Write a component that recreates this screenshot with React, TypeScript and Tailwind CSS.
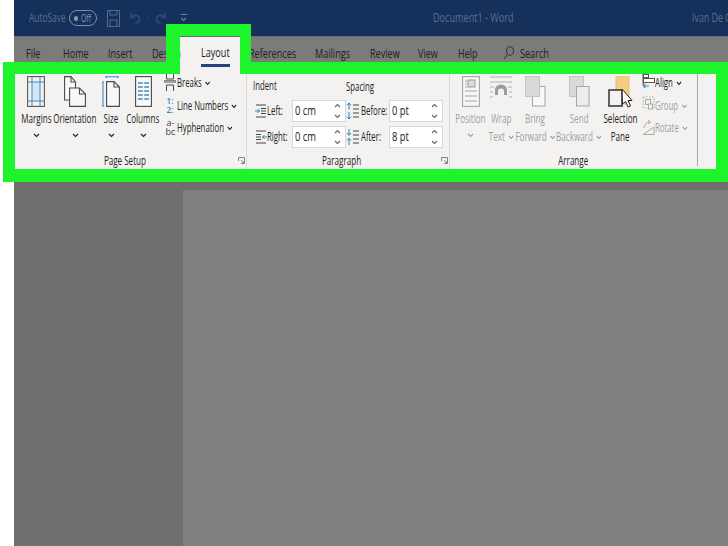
import React from "react";

const C = ({ cls = "" }: { cls?: string }) => (
  <svg width="7" height="5" viewBox="0 0 7 5" className={cls} fill="none" stroke="currentColor" strokeWidth="1.1">
    <path d="M1 1l2.5 2.5L6 1" />
  </svg>
);
const CI = () => (
  <svg width="10" height="5" viewBox="0 0 7 5" preserveAspectRatio="none" className="inline-block ml-[5px] align-middle" fill="none" stroke="currentColor" strokeWidth="1.1">
    <path d="M1 1l2.5 2.5L6 1" />
  </svg>
);

const T = ({ children, cls = "" }: { children: React.ReactNode; cls?: string }) => (
  <span className={`inline-block whitespace-nowrap origin-left scale-x-[.70] leading-[16px] ${cls}`}>{children}</span>
);
const L = ({ children, cls = "" }: { children: React.ReactNode; cls?: string }) => (
  <span className={`inline-block whitespace-nowrap origin-left scale-x-[.6] text-[13px] leading-[16px] ${cls}`}>{children}</span>
);
const M = ({ children, cls = "" }: { children: React.ReactNode; cls?: string }) => (
  <span className={`inline-block whitespace-nowrap origin-center scale-x-[.62] text-[13px] leading-[18px] ${cls}`}>{children}</span>
);

const Tab = ({ children, cls }: { children: React.ReactNode; cls: string }) => (
  <div className={`h-[38px] pt-[7px] shrink-0 text-[13px] text-[#222222] ${cls}`}>
    <T>{children}</T>
  </div>
);

const Big = ({
  icon,
  lines,
  w,
  off = false,
  chev = false,
  inlineChev = false,
}: {
  icon: React.ReactNode;
  lines: string[];
  w: string;
  off?: boolean;
  chev?: boolean;
  inlineChev?: boolean;
}) => (
  <div className={`flex flex-col items-center shrink-0 pt-[2px] ${w} ${off ? "text-[#9f9f9f]" : "text-[#222222]"}`}>
    <div className="h-[32px] flex items-start justify-center">{icon}</div>
    <div className="h-[18px] mt-[1px] flex justify-center"><M>{lines[0]}</M></div>
    {lines[1] && (
      <div className="h-[18px] flex justify-center items-center">
        <M>
          {lines[1]}
          {inlineChev && <CI />}
        </M>
      </div>
    )}
    {chev && <div className="h-[14px] mt-[1px] flex items-center justify-center"><C /></div>}
  </div>
);

const Small = ({ icon, label, off = false }: { icon: React.ReactNode; label: string; off?: boolean }) => (
  <div className={`h-[18px] flex items-center ${off ? "text-[#9f9f9f]" : "text-[#222222]"}`}>
    <div className="w-[13px] h-[18px] flex items-center justify-start shrink-0">{icon}</div>
    <div className="w-[48px] flex items-center shrink-0">
      <L>
        {label}
        <CI />
      </L>
    </div>
  </div>
);

const Launcher = () => (
  <svg width="7" height="7" viewBox="0 0 7 7" fill="none" stroke="#777" strokeWidth="0.9">
    <path d="M.5 4V.5H6.5V6.5H3M3 3.2L6 6M4.5 6H6V4.5" />
  </svg>
);

const Spin = ({ v }: { v: string }) => (
  <div className="w-[54px] h-[22px] bg-white border border-[#d8d8d8] flex items-center pl-[2px] pr-[4px] text-[#222222] shrink-0">
    <div className="flex-1"><L cls="scale-x-[.72]">{v}</L></div>
    <div className="flex flex-col gap-[6px] text-[#666]">
      <C cls="rotate-180" />
      <C />
    </div>
  </div>
);

const MarginsIcon = () => (
  <svg width="18" height="31" viewBox="0 0 18 31" fill="none">
    <rect x="5" y="6" width="8" height="19" fill="#d6e6f2" />
    <rect x=".6" y=".6" width="16.8" height="29.8" fill="none" stroke="#5a5a5a" strokeWidth="1.1" />
    <path d="M5 1v29M13 1v29M1 6h16M1 25h16" stroke="#3c8cc4" strokeWidth="1" />
  </svg>
);
const OrientationIcon = () => (
  <svg width="22" height="31" viewBox="0 0 22 31" fill="#f8f8f8" stroke="#4a4a4a" strokeWidth="1.1">
    <path d="M.6.6H7L11.5 6V24H.6Z" />
    <path d="M7 .6V6H11.5" fill="none" />
    <path d="M5.6 12H15.5L21.4 18V30.4H5.6Z" />
    <path d="M15.5 12V18H21.4" fill="none" />
  </svg>
);
const SizeIcon = () => (
  <svg width="18" height="31" viewBox="0 0 18 31" fill="none">
    <path d="M4 .8H16M4 0V2M16 0V2M1 6V30M0 6H2M0 30H2" stroke="#3c8cc4" strokeWidth="1.1" />
    <path d="M4.6 5.6H12L17.4 11V30.4H4.6Z" fill="#f8f8f8" stroke="#4a4a4a" strokeWidth="1.1" />
    <path d="M12 5.6V11H17.4" stroke="#4a4a4a" strokeWidth="1.1" />
  </svg>
);
const ColumnsIcon = () => (
  <svg width="17" height="31" viewBox="0 0 17 31" fill="none">
    <rect x=".6" y=".6" width="15.8" height="29.8" fill="#f8f8f8" stroke="#4a4a4a" strokeWidth="1.1" />
    <path d="M3 7h4.8M9.2 7H14M3 11h4.8M9.2 11H14M3 15h4.8M9.2 15H14M3 19h4.8M9.2 19H14M3 23h4.8M9.2 23H14" stroke="#3c8cc4" strokeWidth="1.3" />
  </svg>
);
const BreaksIcon = () => (
  <svg width="12" height="17" viewBox="0 0 12 17" fill="none" stroke="#4a4a4a" strokeWidth="1">
    <path d="M2.5 0V5H9.5V0M0 8H12M2.5 17V11H9.5V17" />
    <path d="M0 6.5H12" stroke="#888" />
  </svg>
);
const LineNumIcon = () => (
  <div className="w-[12px] h-[18px] flex flex-col items-center justify-center text-[8px] leading-[9px] text-[#2f82bd] font-semibold">
    <span>1:</span>
    <span>2:</span>
  </div>
);
const HyphIcon = () => (
  <div className="w-[13px] h-[18px] flex flex-col items-center justify-center text-[#444] text-[9px] leading-[9px]">
    <span>a-</span>
    <span>bc</span>
  </div>
);
const AlignIcon = () => (
  <svg width="13" height="17" viewBox="0 0 13 17" fill="none">
    <path d="M1 0V11" stroke="#555" strokeWidth="1" />
    <rect x="1.5" y=".5" width="5" height="3" fill="#fff" stroke="#555" />
    <rect x="1.5" y="4.5" width="11" height="4" fill="#fff" stroke="#555" />
    <path d="M1 12H7M1 12L3.5 9.8M1 12L3.5 14.2" stroke="#3c8cc4" strokeWidth="1.1" />
  </svg>
);
const GroupIcon = () => (
  <svg width="13" height="17" viewBox="0 0 13 17" fill="none" stroke="#a9a9a9">
    <path d="M1 1H12V12H1Z" strokeDasharray="1.5 1.5" />
    <rect x="3.5" y="3.5" width="5" height="5" />
    <rect x="6.5" y="8" width="4" height="5" fill="#f3f2f1" />
  </svg>
);
const RotateIcon = () => (
  <svg width="13" height="17" viewBox="0 0 13 17" fill="none" stroke="#a9a9a9">
    <path d="M1 15.5L12 8V15.5Z" />
    <path d="M2 9Q3 3 8 3M6 1L8.5 3L6 5" />
  </svg>
);

const IndentIcon = ({ right = false }: { right?: boolean }) => (
  <svg width="12" height="14" viewBox="0 0 12 14" fill="none" className="shrink-0">
    <path d="M1 1H11M1 13H11" stroke="#444" strokeWidth="1.2" />
    {right ? (
      <>
        <path d="M1 4.5H6M1 7H6M1 9.5H6" stroke="#444" />
        <path d="M12 7H7.5M9.5 5L7.5 7L9.5 9" stroke="#2f82bd" />
      </>
    ) : (
      <>
        <path d="M6 4.5H11M6 7H11M6 9.5H11" stroke="#444" />
        <path d="M0 7H4.5M2.5 5L4.5 7L2.5 9" stroke="#2f82bd" />
      </>
    )}
  </svg>
);
const SpacingIcon = ({ after = false }: { after?: boolean }) => (
  <svg width="14" height="16" viewBox="0 0 14 16" fill="none" className="shrink-0">
    <path d="M7 2H13M7 6H13M7 10H13M7 14H13" stroke="#444" strokeWidth="1.2" />
    {after ? (
      <path d="M3 0V6M1 4L3 6.3L5 4M3 9.5V16M1 11.5L3 9.2L5 11.5" stroke="#2f82bd" />
    ) : (
      <path d="M3 0V6.5M1 2.2L3 0L5 2.2M3 9V16M1 13.8L3 16L5 13.8" stroke="#2f82bd" />
    )}
  </svg>
);

const PositionIcon = () => (
  <svg width="18" height="31" viewBox="0 0 18 31" fill="none">
    <rect x=".6" y=".6" width="16.8" height="29.8" fill="#f6f6f6" stroke="#a5a5a5" strokeWidth="1.1" />
    <rect x="6" y="4" width="7" height="7" fill="#dcdcdc" stroke="#999" />
    <path d="M3 5H5M3 8H5M3 11H5M3 15H15M3 20H15M3 25H15" stroke="#a5a5a5" strokeWidth="1.2" />
  </svg>
);
const WrapIcon = () => (
  <svg width="22" height="25" viewBox="0 0 22 25" fill="none">
    <path d="M0 1H22M0 6H22M0 11H4M18 11H22M0 16H3M19 16H22M0 21H3M19 21H22" stroke="#b0b0b0" strokeWidth="1.2" />
    <path d="M5 19V14A6 5.5 0 0 1 17 14V19H14V15A3 2.5 0 0 0 8 15V19Z" fill="#9c9c9c" />
  </svg>
);
const ForwardIcon = () => (
  <svg width="21" height="31" viewBox="0 0 21 31" fill="none">
    <rect x="7.5" y="10.5" width="12.5" height="19.5" fill="#f8f8f8" stroke="#a5a5a5" />
    <rect x=".5" y=".5" width="14" height="20" fill="#d9d9d9" stroke="#c4c4c4" />
  </svg>
);
const BackwardIcon = () => (
  <svg width="21" height="31" viewBox="0 0 21 31" fill="none">
    <rect x=".5" y=".5" width="14" height="20" fill="#d9d9d9" stroke="#c4c4c4" />
    <rect x="7.5" y="10.5" width="12.5" height="19.5" fill="#ececec" stroke="#a5a5a5" />
  </svg>
);
const SelectionIcon = () => (
  <svg width="26" height="33" viewBox="0 0 26 33" fill="none">
    <rect x="8" y="0" width="13" height="28" fill="#f4cd80" stroke="#e7b766" strokeWidth=".8" />
    <rect x="1" y="14" width="13" height="16" fill="#f4f2f0" stroke="#3c3c3c" strokeWidth="1.6" />
    <path d="M14 13L24 24.5L20 24.5L22.5 30L20 31L17.5 25.5L14.5 28Z" fill="#fff" stroke="#222" strokeWidth="1" />
  </svg>
);

const Foot = ({ label, launcher = false }: { label: string; launcher?: boolean }) => (
  <div className="h-[16px] -mt-[1px] shrink-0 flex items-center text-[#222222]">
    <div className="flex-1 flex justify-center"><M>{label}</M></div>
    {launcher && <div className="w-[12px] shrink-0 flex items-center justify-end pr-[1px]"><Launcher /></div>}
  </div>
);

export default function App() {
  return (
    <div className="w-[728px] h-[546px] relative overflow-hidden bg-white flex font-['Open_Sans','Noto_Sans',sans-serif] text-[12px]">
      <div className="w-[14px] shrink-0 bg-white" />
      <div className="flex-1 min-w-0 flex flex-col">
        {/* Title bar */}
        <div className="h-[36px] bg-[#16305c] flex items-center text-[#566d8f] text-[12px] shrink-0">
          <div className="w-[15px] shrink-0" />
          <div className="w-[40px] shrink-0"><T>AutoSave</T></div>
          <div className="w-[28px] h-[16px] rounded-full border border-[#7f8ea6] flex items-center pl-[4px] gap-[3px] shrink-0">
            <div className="w-[5px] h-[5px] rounded-full bg-[#8a97ad]" />
            <T cls="text-[10px] text-[#8695ad]">Off</T>
          </div>
          <svg width="13" height="17" viewBox="0 0 13 17" fill="none" stroke="#506a90" className="ml-[10px] shrink-0">
            <rect x=".5" y=".5" width="12" height="16" />
            <path d="M3 .5V5H10V.5M3 16.5V10H10V16.5" />
          </svg>
          <svg width="11" height="14" viewBox="0 0 11 14" fill="none" stroke="#2f4a75" strokeWidth="1.4" className="ml-[10px] shrink-0">
            <path d="M2 6A4 4 0 1 1 5 12M1 2V6.5H5.5" />
          </svg>
          <div className="w-[1px] h-[2px] ml-[7px] bg-[#2f4a75] shrink-0" />
          <svg width="11" height="14" viewBox="0 0 11 14" fill="none" stroke="#2f4a75" strokeWidth="1.4" className="ml-[6px] shrink-0">
            <path d="M9 6A4 4 0 1 0 6 12M10 2V6.5H5.5" />
          </svg>
          <div className="ml-[14px] flex flex-col items-center gap-[2px] text-[#6b80a0] shrink-0">
            <div className="w-[6px] h-[1px] bg-[#6b80a0]" />
            <C />
          </div>
          <div className="w-[246px] shrink-0" />
          <div className="w-[80px] shrink-0"><T cls="scale-x-[.76]">Document1 - Word</T></div>
          <div className="w-[179px] shrink-0" />
          <div className="whitespace-nowrap"><T cls="scale-x-[.74]">Ivan De C</T></div>
        </div>

        {/* Tabs */}
        <div className="h-[38px] bg-[#7b7b79] flex shrink-0 border-t border-[#6d6d6d]">
          <Tab cls="w-[37px] pl-[12px]">File</Tab>
          <Tab cls="w-[45px] pl-[12px]">Home</Tab>
          <Tab cls="w-[44px] pl-[12px]">Insert</Tab>
          <Tab cls="w-[40px] pl-[12px]">Design</Tab>
          <div className="w-[60px] h-[38px] shrink-0 bg-[#f3f2f1] pl-[21px] pt-[6px] flex flex-col text-[13px] text-[#222222]">
            <div className="h-[19px]"><T>Layout</T></div>
            <div className="w-[29px] h-[3px] mt-[2px] bg-[#24437f]" />
          </div>
          <Tab cls="w-[63px] pl-[9px]">References</Tab>
          <Tab cls="w-[55px] pl-[12px]">Mailings</Tab>
          <Tab cls="w-[48px] pl-[12px]">Review</Tab>
          <Tab cls="w-[40px] pl-[12px]">View</Tab>
          <Tab cls="w-[45px] pl-[12px]">Help</Tab>
          <div className="pl-[12px] pt-[9px] shrink-0">
            <svg width="11" height="14" viewBox="0 0 11 14" fill="none" stroke="#333" strokeWidth="1">
              <ellipse cx="7" cy="5" rx="3.5" ry="4.2" />
              <path d="M4.5 8.5L1 13" />
            </svg>
          </div>
          <Tab cls="pl-[6px]">Search</Tab>
        </div>

        {/* Ribbon */}
        <div className="h-[108px] bg-[#f3f2f1] flex shrink-0 text-[12px]">
          <div className="w-[1px] shrink-0" />
          {/* Page Setup */}
          <div className="w-[232px] shrink-0 border-r border-[#d9d9d9] h-[96px] flex flex-col">
            <div className="h-[79px] shrink-0 flex">
              <Big w="w-[42px]" icon={<MarginsIcon />} lines={["Margins"]} chev />
              <Big w="w-[36px]" icon={<OrientationIcon />} lines={["Orientation"]} chev />
              <Big w="w-[36px]" icon={<SizeIcon />} lines={["Size"]} chev />
              <Big w="w-[28px]" icon={<ColumnsIcon />} lines={["Columns"]} chev />
              <div className="ml-[7px] -mt-[1px] flex flex-col gap-[4.5px]">
                <Small icon={<BreaksIcon />} label="Breaks" />
                <Small icon={<LineNumIcon />} label="Line Numbers" />
                <Small icon={<HyphIcon />} label="Hyphenation" />
              </div>
            </div>
            <Foot label="Page Setup" launcher />
          </div>

          {/* Paragraph */}
          <div className="w-[203px] shrink-0 border-r border-[#d9d9d9] h-[96px] flex flex-col text-[#222222]">
            <div className="h-[79px] shrink-0 pt-[5px] pl-[6px]">
              <div className="h-[14px] flex items-center">
                <div className="w-[93px]"><L>Indent</L></div>
                <L>Spacing</L>
              </div>
              <div className="mt-[7px] h-[22px] pl-[2px] flex items-center">
                <IndentIcon />
                <div className="w-[25px] shrink-0"><L>Left:</L></div>
                <Spin v="0 cm" />
                <SpacingIcon />
                <div className="w-[29px] shrink-0 pl-[1px]"><L>Before:</L></div>
                <Spin v="0 pt" />
              </div>
              <div className="mt-[4px] h-[22px] pl-[2px] flex items-center">
                <IndentIcon right />
                <div className="w-[25px] shrink-0"><L>Right:</L></div>
                <Spin v="0 cm" />
                <SpacingIcon after />
                <div className="w-[29px] shrink-0 pl-[1px]"><L>After:</L></div>
                <Spin v="8 pt" />
              </div>
            </div>
            <Foot label="Paragraph" launcher />
          </div>

          {/* Arrange */}
          <div className="w-[248px] shrink-0 border-r border-[#a8a8a8] h-[92px] flex flex-col">
            <div className="h-[79px] shrink-0 flex">
              <Big w="w-[41px]" off icon={<PositionIcon />} lines={["Position"]} chev />
              <Big w="w-[20px]" off icon={<WrapIcon />} lines={["Wrap", "Text"]} inlineChev />
              <Big w="w-[49px]" off icon={<ForwardIcon />} lines={["Bring", "Forward"]} inlineChev />
              <Big w="w-[39px]" off icon={<BackwardIcon />} lines={["Send", "Backward"]} inlineChev />
              <Big w="w-[43px]" icon={<SelectionIcon />} lines={["Selection", "Pane"]} />
              <div className="-mt-[1px] flex flex-col gap-[4.5px]">
                <Small icon={<AlignIcon />} label="Align" />
                <Small off icon={<GroupIcon />} label="Group" />
                <Small off icon={<RotateIcon />} label="Rotate" />
              </div>
            </div>
            <Foot label="Arrange" />
          </div>
        </div>

        {/* Document */}
        <div className="flex-1 bg-[#6f6f6f] pl-[169px] pt-[8px] flex min-h-0">
          <div className="flex-1 bg-[#7f7f7f]" />
        </div>
      </div>

      {/* Green highlight annotation */}
      <div className="absolute left-[3px] top-[74px] w-[725px] h-[108px] border-l-[12px] border-r-[12px] border-b-[13px] border-[#1ef42c]" />
      <div className="absolute left-[3px] top-[62px] w-[175px] h-[12px] bg-[#1ef42c]" />
      <div className="absolute left-[240px] top-[62px] w-[488px] h-[12px] bg-[#1ef42c]" />
      <div className="absolute left-[166px] top-[24px] w-[85px] h-[50px] border-l-[14px] border-r-[11px] border-t-[12px] border-[#1ef42c]" />
    </div>
  );
}
